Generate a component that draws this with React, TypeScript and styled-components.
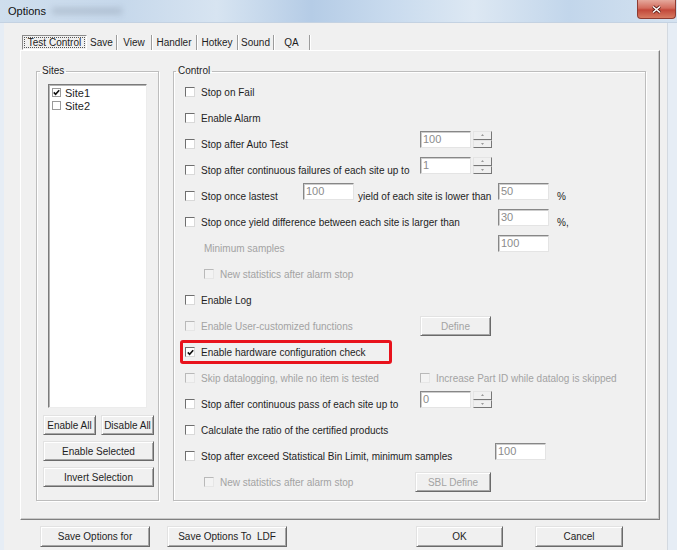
import React, { FC } from 'react';
import styled, { createGlobalStyle, css } from 'styled-components';

const UI_FONT = `"Liberation Sans", Arial, sans-serif`;
const TEXT = '#1e1e1e';
const DISABLED = '#a3a3a3';
const COLS = '118px 117px 78px 59px 1fr';

const GlobalStyle = createGlobalStyle`
	html, body {
		margin: 0;
		padding: 0;
		background: #ffffff;
	}
	body {
		font-family: ${UI_FONT};
		font-size: 10px;
		color: ${TEXT};
	}
`;

const TABS = [
	{ label: 'Test Control', width: 65 },
	{ label: 'Save', width: 30 },
	{ label: 'View', width: 35 },
	{ label: 'Handler', width: 45 },
	{ label: 'Hotkey', width: 41 },
	{ label: 'Sound', width: 36 },
	{ label: 'QA', width: 36 },
];

const CheckMark: FC = () => (
	<svg width="7" height="7" viewBox="0 0 7 7">
		<path d="M0.8 3.4 L2.6 5.3 L6.2 1.2" fill="none" stroke="#111" strokeWidth="1.6" />
	</svg>
);

type CheckProps = {
	label: string;
	checked?: boolean;
	disabled?: boolean;
	indent?: boolean;
};

const Check: FC<CheckProps> = ({ label, checked, disabled, indent }) => (
	<CheckLabel $disabled={disabled} $indent={indent}>
		<CheckBox $disabled={disabled}>{checked && <CheckMark />}</CheckBox>
		{label}
	</CheckLabel>
);

const Spin: FC<{ value: string }> = ({ value }) => (
	<SpinWrap>
		<Field $width={51}>{value}</Field>
		<SpinButtons>
			<SpinHalf>
				<svg width="3" height="2" viewBox="0 0 3 2">
					<path d="M1.5 0 L3 2 L0 2 Z" fill="#9a9a9a" />
				</svg>
			</SpinHalf>
			<SpinHalf>
				<svg width="3" height="2" viewBox="0 0 3 2">
					<path d="M0 0 L3 0 L1.5 2 Z" fill="#9a9a9a" />
				</svg>
			</SpinHalf>
		</SpinButtons>
	</SpinWrap>
);

const App: FC = () => (
	<>
		<GlobalStyle />
		<Window>
			<TitleBar>
				<Title>Options</Title>
				<TitleSmudge />
				<CloseButton>
					<svg width="11" height="9" viewBox="0 0 11 9">
						<path d="M2 1.5 L9 7.5 M9 1.5 L2 7.5" stroke="#5b1a14" strokeWidth="3" />
						<path d="M2 1.5 L9 7.5 M9 1.5 L2 7.5" stroke="#ffffff" strokeWidth="1.6" />
					</svg>
				</CloseButton>
			</TitleBar>
			<FrameRow>
				<Client>
					<TabStrip>
						{TABS.map((tab, i) => (
							<Tab key={tab.label} $w={tab.width} $active={i === 0}>
								{i === 0 ? <FocusRect>{tab.label}</FocusRect> : tab.label}
							</Tab>
						))}
					</TabStrip>
					<TabPanel>
						<SitesGroup>
							<Legend $offset={-3}>Sites</Legend>
							<SiteList>
								<SiteItem>
									<ListCheck>{<CheckMark />}</ListCheck>
									Site1
								</SiteItem>
								<SiteItem>
									<ListCheck />
									Site2
								</SiteItem>
							</SiteList>
							<ButtonPair>
								<Button>Enable All</Button>
								<Button>Disable All</Button>
							</ButtonPair>
							<Button>Enable Selected</Button>
							<Button>Invert Selection</Button>
						</SitesGroup>

						<ControlGroup>
							<Legend $offset={-9}>Control</Legend>
							<Row>
								<Span $from={1} $to={-1}>
									<Check label="Stop on Fail" />
								</Span>
							</Row>
							<Row>
								<Span $from={1} $to={-1}>
									<Check label="Enable Alarm" />
								</Span>
							</Row>
							<Row>
								<Span $from={1} $to={3}>
									<Check label="Stop after Auto Test" />
								</Span>
								<Span $from={3} $to={5}>
									<Spin value="100" />
								</Span>
							</Row>
							<Row>
								<Span $from={1} $to={3}>
									<Check label="Stop after continuous failures of each site up to" />
								</Span>
								<Span $from={3} $to={5}>
									<Spin value="1" />
								</Span>
							</Row>
							<Row>
								<Span $from={1} $to={2}>
									<Check label="Stop once lastest" />
								</Span>
								<Inline $from={2} $to={4}>
									<Field $width={51}>100</Field>
									<Caption>yield of each site is lower than</Caption>
								</Inline>
								<Span $from={4} $to={5}>
									<Field $width={51}>50</Field>
								</Span>
								<Span $from={5} $to={6}>
									<Caption>%</Caption>
								</Span>
							</Row>
							<Row>
								<Span $from={1} $to={4}>
									<Check label="Stop once yield difference between each site is larger than" />
								</Span>
								<Span $from={4} $to={5}>
									<Field $width={51}>30</Field>
								</Span>
								<Span $from={5} $to={6}>
									<Caption>%,</Caption>
								</Span>
							</Row>
							<Row>
								<Span $from={1} $to={4}>
									<Caption $disabled $indent>
										Minimum samples
									</Caption>
								</Span>
								<Span $from={4} $to={5}>
									<Field $width={51}>100</Field>
								</Span>
							</Row>
							<Row>
								<Span $from={1} $to={-1}>
									<Check label="New statistics after alarm stop" disabled indent />
								</Span>
							</Row>
							<Row>
								<Span $from={1} $to={-1}>
									<Check label="Enable Log" />
								</Span>
							</Row>
							<Row>
								<Span $from={1} $to={3}>
									<Check label="Enable User-customized functions" disabled />
								</Span>
								<Span $from={3} $to={5}>
									<Button $width={71} $disabled>
										Define
									</Button>
								</Span>
							</Row>
							<Row>
								<Span $from={1} $to={-1}>
									<Highlight>
										<Check label="Enable hardware configuration check" checked />
									</Highlight>
								</Span>
							</Row>
							<Row>
								<Span $from={1} $to={3}>
									<Check label="Skip datalogging, while no item is tested" disabled />
								</Span>
								<Span $from={3} $to={-1}>
									<Check label="Increase Part ID while datalog is skipped" disabled />
								</Span>
							</Row>
							<Row>
								<Span $from={1} $to={3}>
									<Check label="Stop after continuous pass of each site up to" />
								</Span>
								<Span $from={3} $to={5}>
									<Spin value="0" />
								</Span>
							</Row>
							<Row>
								<Span $from={1} $to={-1}>
									<Check label="Calculate the ratio of the certified products" />
								</Span>
							</Row>
							<Row>
								<Span $from={1} $to={4}>
									<Check label="Stop after exceed Statistical Bin Limit, minimum samples" />
								</Span>
								<Span $from={4} $to={5} $shift={-3}>
									<Field $width={51}>100</Field>
								</Span>
							</Row>
							<Row>
								<Span $from={1} $to={3}>
									<Check label="New statistics after alarm stop" disabled indent />
								</Span>
								<Span $from={3} $to={5} $shift={-5}>
									<Button $width={76} $disabled>
										SBL Define
									</Button>
								</Span>
							</Row>
						</ControlGroup>
					</TabPanel>
					<Footer>
						<Button $width={110} $height={21}>
							Save Options for
						</Button>
						<Button $width={120} $height={21}>
							Save Options To&nbsp; LDF
						</Button>
						<FooterSpacer />
						<Button $width={87} $height={21}>
							OK
						</Button>
						<Button $width={88} $height={21}>
							Cancel
						</Button>
					</Footer>
				</Client>
			</FrameRow>
		</Window>
	</>
);

const Window = styled.div`
	width: 677px;
	height: 550px;
	overflow: hidden;
	display: flex;
	flex-direction: column;
	background: #e6edf5;
	font-family: ${UI_FONT};
`;

const TitleBar = styled.div`
	flex: 0 0 22px;
	display: flex;
	align-items: flex-start;
	background: linear-gradient(
		90deg,
		#cfdeed 0%,
		#c6d8eb 18%,
		#d7e4f1 32%,
		#b5cce6 46%,
		#c9dbee 58%,
		#dde8f3 70%,
		#c2d6eb 84%,
		#d4e2f0 100%
	);
	border-bottom: 1px solid #c4d2e2;
`;

const Title = styled.span`
	font-size: 11px;
	line-height: 22px;
	padding-left: 8px;
	color: #101010;
`;

const TitleSmudge = styled.span`
	width: 70px;
	height: 6px;
	margin: 8px 0 0 6px;
	background: #8f9cad;
	opacity: 0.45;
	filter: blur(3px);
`;

const CloseButton = styled.div`
	margin-left: auto;
	margin-right: 1px;
	width: 37px;
	height: 18px;
	display: flex;
	align-items: center;
	justify-content: center;
	border: 1px solid #8d3b31;
	border-top: none;
	border-radius: 0 0 4px 4px;
	background: linear-gradient(180deg, #e5a89c 0%, #d36c5d 45%, #c2483a 55%, #d77b62 100%);
`;

const FrameRow = styled.div`
	flex: 1;
	display: flex;
	padding-left: 4px;
`;

const Client = styled.div`
	width: 664px;
	box-sizing: border-box;
	display: flex;
	flex-direction: column;
	padding: 12px 7px 0 16px;
	background: #f0f0f0;
	border-right: 1px solid #d3d9e0;
`;

const TabStrip = styled.div`
	display: flex;
	height: 15px;
	padding-left: 2px;
`;

const Tab = styled.div<{ $w: number; $active?: boolean }>`
	width: ${(p) => p.$w}px;
	height: 15px;
	box-sizing: border-box;
	display: flex;
	align-items: center;
	justify-content: center;
	font-size: 10px;
	color: ${TEXT};
	white-space: nowrap;
	${(p) =>
		p.$active
			? css`
					border: 1px solid;
					border-color: #8a8a8a #ffffff #ffffff #8a8a8a;
					padding: 1px;
			  `
			: css`
					border-right: 1px solid #9c9c9c;
					box-shadow: 1px 0 0 #ffffff;
			  `}
`;

const FocusRect = styled.span`
	flex: 1;
	align-self: stretch;
	display: flex;
	align-items: center;
	justify-content: center;
	outline: 1px dotted #555;
	outline-offset: -1px;
`;

const TabPanel = styled.div`
	width: 640px;
	height: 470px;
	box-sizing: border-box;
	display: flex;
	align-items: flex-start;
	gap: 14px;
	padding: 14px 13px 0 15px;
	border: 1px solid;
	border-color: #ffffff #808080 #808080 #ffffff;
	box-shadow: inset -1px -1px 0 #c9c9c9;
`;

const GroupBox = styled.fieldset`
	margin: 0;
	min-width: 0;
	box-sizing: border-box;
	height: 436px;
	border: 1px solid #bdbdbd;
	box-shadow: 1px 1px 0 #ffffff, inset 1px 1px 0 #ffffff;
`;

const SitesGroup = styled(GroupBox)`
	width: 123px;
	padding: 7px 4px 0 6px;
	display: flex;
	flex-direction: column;
	gap: 6px;
`;

const ControlGroup = styled(GroupBox)`
	width: 473px;
	padding: 2px 0 0 11px;
`;

const Legend = styled.legend<{ $offset: number }>`
	font-size: 10px;
	line-height: 12px;
	padding: 0 2px;
	margin-left: ${(p) => p.$offset}px;
	color: ${TEXT};
`;

const SiteList = styled.div`
	height: 324px;
	box-sizing: border-box;
	margin: 0 7px 1px 5px;
	background: #ffffff;
	border: 1px solid;
	border-color: #7b7b7b #ececec #ececec #7b7b7b;
	box-shadow: inset 1px 1px 0 #b4b4b4;
	padding: 1px 0 0 3px;
`;

const SiteItem = styled.div`
	height: 13px;
	display: flex;
	align-items: center;
	gap: 4px;
	font-size: 11px;
	color: ${TEXT};
`;

const ListCheck = styled.span`
	width: 9px;
	height: 9px;
	box-sizing: border-box;
	display: flex;
	align-items: center;
	justify-content: center;
	border: 1px solid #9a9a9a;
	background: #ffffff;
`;

const ButtonPair = styled.div`
	display: grid;
	grid-template-columns: 1fr 1fr;
	gap: 5px;
`;

const Button = styled.div<{ $width?: number; $height?: number; $disabled?: boolean }>`
	width: ${(p) => (p.$width ? `${p.$width}px` : 'auto')};
	height: ${(p) => p.$height ?? 20}px;
	box-sizing: border-box;
	display: flex;
	align-items: center;
	justify-content: center;
	font-size: 10px;
	white-space: nowrap;
	color: ${(p) => (p.$disabled ? DISABLED : TEXT)};
	background: #f0f0f0;
	border: 1px solid;
	border-color: #e2e2e2 #6a6a6a #6a6a6a #e2e2e2;
	box-shadow: inset 1px 1px 0 #ffffff, inset -1px -1px 0 #a6a6a6;
`;

const Row = styled.div`
	display: grid;
	grid-template-columns: ${COLS};
	height: 26px;
	align-items: center;
`;

const Span = styled.div<{ $from: number; $to: number; $shift?: number }>`
	grid-column: ${(p) => p.$from} / ${(p) => p.$to};
	display: flex;
	align-items: center;
	margin-left: ${(p) => p.$shift ?? 0}px;
	white-space: nowrap;
	min-width: 0;
`;

const Inline = styled(Span)`
	gap: 4px;
`;

const CheckLabel = styled.label<{ $disabled?: boolean; $indent?: boolean }>`
	display: flex;
	align-items: center;
	gap: 6px;
	font-size: 10px;
	white-space: nowrap;
	padding-left: ${(p) => (p.$indent ? 19 : 0)}px;
	color: ${(p) => (p.$disabled ? DISABLED : TEXT)};
`;

const CheckBox = styled.span<{ $disabled?: boolean }>`
	width: 10px;
	height: 10px;
	box-sizing: border-box;
	display: flex;
	align-items: center;
	justify-content: center;
	border: 1px solid;
	border-color: ${(p) =>
		p.$disabled ? '#b9b9b9 #e6e6e6 #e6e6e6 #b9b9b9' : '#6f6f6f #d9d9d9 #d9d9d9 #6f6f6f'};
	background: ${(p) => (p.$disabled ? '#f3f3f3' : '#ffffff')};
`;

const Caption = styled.span<{ $disabled?: boolean; $indent?: boolean }>`
	font-size: 10px;
	white-space: nowrap;
	padding-left: ${(p) => (p.$indent ? 19 : 0)}px;
	color: ${(p) => (p.$disabled ? DISABLED : TEXT)};
`;

const Field = styled.div<{ $width: number }>`
	width: ${(p) => p.$width}px;
	height: 17px;
	box-sizing: border-box;
	margin-bottom: 9px;
	padding: 1px 0 0 2px;
	font-size: 11px;
	line-height: 13px;
	color: #8c8c8c;
	background: #ffffff;
	border: 1px solid;
	border-color: #878787 #e4e4e4 #e4e4e4 #878787;
	box-shadow: inset 1px 1px 0 #cdcdcd;
`;

const SpinWrap = styled.div`
	display: flex;
	align-items: flex-start;
	gap: 2px;
	margin-bottom: 9px;

	${Field} {
		margin-bottom: 0;
	}
`;

const SpinButtons = styled.div`
	width: 19px;
	height: 17px;
	display: flex;
	flex-direction: column;
`;

const SpinHalf = styled.div`
	flex: 1;
	box-sizing: border-box;
	display: flex;
	align-items: center;
	justify-content: center;
	background: #f0f0f0;
	border: 1px solid;
	border-color: #e4e4e4 #777777 #777777 #e4e4e4;
`;

const Highlight = styled.div`
	width: 212px;
	height: 24px;
	box-sizing: border-box;
	margin-left: -5px;
	padding-left: 2px;
	display: flex;
	align-items: center;
	border: 3px solid #e8121c;
	border-radius: 3px;
`;

const Footer = styled.div`
	display: flex;
	align-items: center;
	gap: 17px;
	padding: 6px 0 0 20px;

	& > :nth-child(5) {
		margin-left: 15px;
	}
`;

const FooterSpacer = styled.div`
	width: 95px;
`;

export default App;
